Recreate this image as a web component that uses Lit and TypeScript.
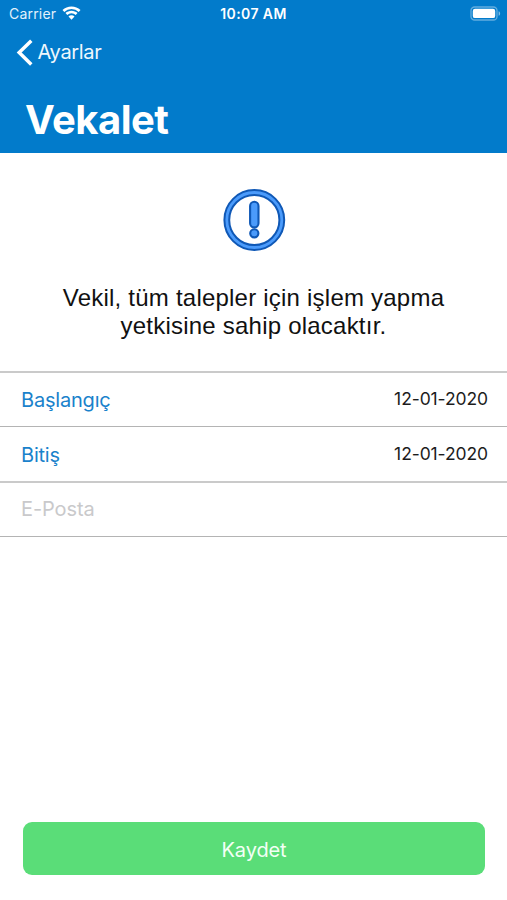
import { LitElement, html, css } from "lit";
import { customElement, property } from "lit/decorators.js";

@customElement("status-bar")
class StatusBar extends LitElement {
  static styles = css`
    :host {
      display: grid;
      grid-template-columns: 1fr auto 1fr;
      align-items: center;
      height: 27px;
      padding: 0 6px 0 9px;
      color: #fff;
      font-size: 14px;
      line-height: 27px;
    }
    .left { display: flex; align-items: center; gap: 6px; }
    .carrier { letter-spacing: 0.2px; color: #e3f1fb; }
    .time { font-weight: 600; letter-spacing: 0.42px; font-size: 14px; padding-right: 3px; }
    .battery { justify-self: end; }
    svg { display: block; }
  `;
  render() {
    return html`
      <div class="left">
        <span class="carrier">Carrier</span>
        <svg width="19" height="15" viewBox="0 0 19 15" fill="#fff">
          <path d="M9.500 .5C6 .5 2.900 1.800.5 4L2.300 5.900A10.600 10.600 0 0 1 9.500 3.100a10.600 10.600 0 0 1 7.200 2.800L18.500 4C16.100 1.800 13 .5 9.500 .5Z"/>
          <path d="M9.500 4.800c-2.300 0-4.400.9-6 2.300l1.800 1.900a6.200 6.200 0 0 1 8.400 0l1.800-1.900c-1.600-1.400-3.700-2.300-6-2.300Z"/>
          <path d="M9.500 9.300c-1.200 0-2.200.4-3 1.200l3 3.300 3-3.300c-.8-.8-1.800-1.200-3-1.200Z"/>
        </svg>
      </div>
      <span class="time">10:07 AM</span>
      <svg class="battery" width="31" height="15" viewBox="0 0 31 15">
        <rect x="1" y="1" width="26" height="13" rx="3.600" fill="none" stroke="#fff" stroke-opacity=".38" stroke-width="1.300"/>
        <rect x="2.800" y="2.700" width="22.400" height="9.400" rx="2.200" fill="#fff"/>
        <path d="M28.600 5.200c2 .7 2 3.900 0 4.600Z" fill="#fff" fill-opacity=".5"/>
      </svg>
    `;
  }
}

@customElement("form-row")
class FormRow extends LitElement {
  @property() label = "";
  @property() value = "";
  static styles = css`
    :host {
      display: flex;
      justify-content: space-between;
      box-sizing: border-box;
      height: 55px;
      padding: 0 19px 0 21px;
      border-bottom: 2px solid #cacaca;
      line-height: 54px;
    }
    :host([thin]) {
      height: 54px;
      margin-bottom: 1px;
      border-bottom: 1px solid #b4b4b4;
    }
    .label { color: #1a82cb; font-size: 20px; letter-spacing: -0.2px; }
    .value { color: #1c1c1c; font-size: 17.500px; line-height: 51px; letter-spacing: -0.1px; }
    .hint { color: #c9c9cb; font-size: 20px; line-height: 52px; letter-spacing: -0.1px; }
  `;
  render() {
    return this.value
      ? html`<span class="label">${this.label}</span><span class="value">${this.value}</span>`
      : html`<span class="hint">${this.label}</span>`;
  }
}

@customElement("app-root")
class AppRoot extends LitElement {
  static styles = css`
    :host {
      display: flex;
      flex-direction: column;
      box-sizing: border-box;
      height: 900px;
      background: #fff;
      font-family: Inter, "Liberation Sans", sans-serif;
      overflow: hidden;
    }
    .header { height: 153px; background: #027bcb; color: #fff; flex: none; }
    .back { display: flex; align-items: center; gap: 5px; height: 51px; padding-left: 15.500px; }
    .back svg { margin-top: 1px; }
    .back-label { font-size: 20px; line-height: 51px; letter-spacing: -0.35px; color: #eef7fd; }
    h1 { margin: 15px 0 0 25px; font-size: 40px; line-height: 53px; font-weight: 700; letter-spacing: -0.5px; }
    .notice { display: flex; flex-direction: column; align-items: center; height: 218px; padding-top: 36px; box-sizing: border-box; flex: none; }
    .notice svg { display: block; }
    .message {
      margin: 31px 0 0;
      font-family: "Liberation Sans", Arial, sans-serif;
      font-size: 24px;
      line-height: 28px;
      letter-spacing: 0.22px;
      color: #111;
      text-align: center;
      white-space: nowrap;
    }
    .form { border-top: 2px solid #cacaca; }
    .save {
      display: block;
      margin: auto 22px 25px 23px;
      height: 53px;
      border: 0;
      border-radius: 9px;
      background: #5add78;
      color: #f3fff5;
      font: 400 20px/53px Inter, "Liberation Sans", sans-serif;
      letter-spacing: -0.1px;
      padding: 2px 0 0;
    }
  `;
  render() {
    return html`
      <div class="header">
        <status-bar></status-bar>
        <div class="back">
          <svg width="17" height="28" viewBox="0 0 17 28" fill="none" stroke="#fff" stroke-width="3.500">
            <path d="M15.300 1.800 3.200 13.600 15.300 25.400"/>
          </svg>
          <span class="back-label">Ayarlar</span>
        </div>
        <h1>Vekalet</h1>
      </div>
      <div class="notice">
        <svg width="64" height="64" viewBox="0 0 64 64" fill="none">
          <circle cx="32.300" cy="31" r="27.500" stroke="#0f58b6" stroke-width="6.800"/>
          <circle cx="32.300" cy="31" r="27.500" stroke="#4b9bfb" stroke-width="2.800"/>
          <rect x="28.100" y="12.800" width="8.400" height="25.600" rx="4.200" fill="#4b9bfb" stroke="#0f58b6" stroke-width="2.100"/>
          <circle cx="32.300" cy="44.300" r="4.100" fill="#4b9bfb" stroke="#0f58b6" stroke-width="2.100"/>
        </svg>
        <p class="message">Vekil, tüm talepler için işlem yapma<br />yetkisine sahip olacaktır.</p>
      </div>
      <div class="form">
        <form-row thin label="Başlangıç" value="12-01-2020"></form-row>
        <form-row label="Bitiş" value="12-01-2020"></form-row>
        <form-row thin label="E-Posta"></form-row>
      </div>
      <button class="save">Kaydet</button>
    `;
  }
}
